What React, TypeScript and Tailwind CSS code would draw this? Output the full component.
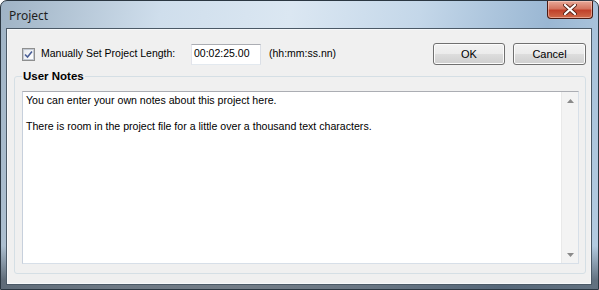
import React from "react";

function CheckBox() {
  return (
    <div className="flex h-[13px] w-[13px] items-center justify-center border border-[#8e8f8f] bg-white">
      <div className="flex h-[11px] w-[11px] items-center justify-center border border-[#c3c9d3] bg-[linear-gradient(135deg,#e6e9ee,#ffffff)]">
        <svg width="9" height="9" viewBox="0 0 9 9">
          <path d="M1 4.5 L3.5 7 L8 1.5" fill="none" stroke="#4a5f97" strokeWidth="1.6" />
        </svg>
      </div>
    </div>
  );
}

function Button({ label, width }: { label: string; width: string }) {
  return (
    <div
      className={`${width} flex h-[22px] items-center justify-center rounded-[3px] border border-[#707070] bg-[linear-gradient(to_bottom,#f2f2f2_0%,#ebebeb_50%,#dddddd_50%,#cfcfcf_100%)] text-[11px] text-black shadow-[inset_0_0_0_1px_#fcfcfc]`}
    >
      {label}
    </div>
  );
}

function ScrollBar() {
  return (
    <div className="flex w-[17px] flex-col justify-between border-l border-[#e9e9e9] bg-[#f3f3f3]">
      <div className="flex h-[17px] items-center justify-center">
        <svg width="7" height="4" viewBox="0 0 7 4">
          <path d="M0 4 L3.5 0 L7 4 Z" fill="#8a8a8a" />
        </svg>
      </div>
      <div className="flex h-[17px] items-center justify-center">
        <svg width="7" height="4" viewBox="0 0 7 4">
          <path d="M0 0 L7 0 L3.5 4 Z" fill="#8a8a8a" />
        </svg>
      </div>
    </div>
  );
}

export default function App() {
  return (
    <div className="flex h-[290px] w-[599px] flex-col overflow-hidden rounded-t-[7px] border border-[#2b3742] bg-[linear-gradient(to_bottom,transparent_0%,transparent_85%,rgba(30,38,48,0.55)_97%),linear-gradient(100deg,#9fb3c5_0%,#cfdeec_25%,#dbe7f2_45%,#c4d7e9_65%,#9ab7d3_85%,#b6cde2_100%)] font-['Liberation_Sans',Arial,sans-serif]">
      <div className="flex h-[28px] shrink-0 items-start">
        <div className="pl-[8px] pt-[7px] font-['Noto_Sans',sans-serif] text-[12px] leading-[16px] text-[#1e1e1e]">
          Project
        </div>
        <div className="ml-auto mr-[5px] flex h-[18px] w-[46px] items-center justify-center rounded-b-[4px] border border-t-0 border-[#4a1a12] bg-[linear-gradient(to_bottom,#e8a998_0%,#d47560_45%,#c1412a_55%,#cf6a4a_100%)] shadow-[inset_0_0_0_1px_rgba(255,220,210,0.5)]">
          <svg width="14" height="11" viewBox="0 0 14 11">
            <path d="M2 1 L12 10 M12 1 L2 10" stroke="#5a2418" strokeWidth="4" strokeLinecap="round" />
            <path d="M2 1 L12 10 M12 1 L2 10" stroke="#ffffff" strokeWidth="2.2" strokeLinecap="round" />
          </svg>
        </div>
      </div>

      <div className="mb-[5px] ml-[6px] mr-[7px] flex flex-1 flex-col border border-[#f7f9fb] bg-[#f0f0f0] shadow-[0_0_0_1px_#4b5966]">
        <div className="mt-[13px] flex h-[22px] items-center pl-[14px] pr-[4px]">
          <CheckBox />
          <div className="ml-[6px] w-[150px] text-[10.5px] text-black">Manually Set Project Length:</div>
          <div className="flex h-[21px] w-[70px] items-center border border-[#abadb3] border-b-[#e3e9ef] border-l-[#e2e3ea] border-r-[#dbdfe6] bg-white pl-[2px] text-[10.5px] text-black">
            00:02:25.00
          </div>
          <div className="ml-[8px] text-[10.5px] text-black">(hh:mm:ss.nn)</div>
          <div className="ml-auto flex gap-[8px]">
            <Button label="OK" width="w-[72px]" />
            <Button label="Cancel" width="w-[73px]" />
          </div>
        </div>

        <fieldset className="mb-[9px] ml-[6px] mr-[4px] mt-[4px] rounded-[3px] border border-[#d5dfe5] px-[7px] pb-[9px] pr-[6px]">
          <legend className="px-[1px] text-[11.5px] font-bold leading-[14px] text-black">User Notes</legend>
          <div className="mt-[8px] flex h-[173px] border border-[#abadb3] border-b-[#d7dfe8] border-l-[#c7d0dc] border-r-[#d7dfe8] bg-white">
            <div className="flex-1 pl-[3px] pt-[2px] text-[10.6px] leading-[13px] text-black">
              <div>You can enter your own notes about this project here.</div>
              <div>&nbsp;</div>
              <div>There is room in the project file for a little over a thousand text characters.</div>
            </div>
            <ScrollBar />
          </div>
        </fieldset>
      </div>
    </div>
  );
}
